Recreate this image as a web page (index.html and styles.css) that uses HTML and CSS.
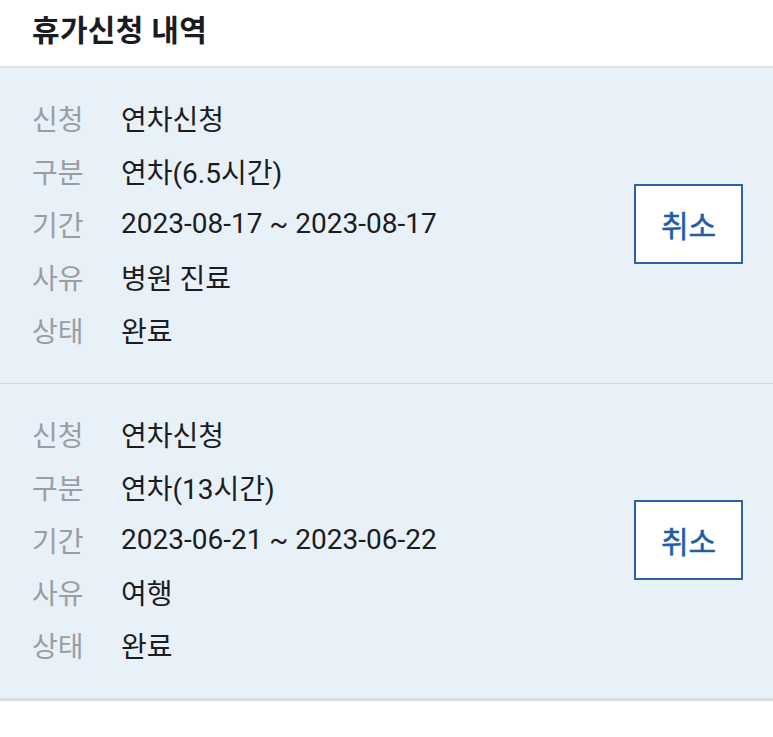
FILE: index.html
```html
<!DOCTYPE html>
<html lang="ko">
<head>
<meta charset="utf-8">
<link rel="stylesheet" href="styles.css">
</head>
<body>
<div class="page">
  <header class="header"><h1 class="title">휴가신청 내역</h1></header>
  <section class="list">
    <div class="card">
      <dl class="rows">
        <div class="row"><dt>신청</dt><dd>연차신청</dd></div>
        <div class="row"><dt>구분</dt><dd>연차(6.5시간)</dd></div>
        <div class="row"><dt>기간</dt><dd>2023-08-17 ~ 2023-08-17</dd></div>
        <div class="row"><dt>사유</dt><dd>병원 진료</dd></div>
        <div class="row"><dt>상태</dt><dd>완료</dd></div>
      </dl>
      <button class="cancel">취소</button>
    </div>
    <div class="card">
      <dl class="rows">
        <div class="row"><dt>신청</dt><dd>연차신청</dd></div>
        <div class="row"><dt>구분</dt><dd>연차(13시간)</dd></div>
        <div class="row"><dt>기간</dt><dd>2023-06-21 ~ 2023-06-22</dd></div>
        <div class="row"><dt>사유</dt><dd>여행</dd></div>
        <div class="row"><dt>상태</dt><dd>완료</dd></div>
      </dl>
      <button class="cancel">취소</button>
    </div>
  </section>
</div>
</body>
</html>
```
FILE: styles.css
```css
* { box-sizing: border-box; }
html, body { margin: 0; padding: 0; background: #ffffff; }
body {
  font-family: Roboto, "Noto Sans CJK KR", sans-serif;
  color: #1b1d20;
  width: 773px;
}
.header {
  height: 68px;
  border-bottom: 2px solid #dfe3e7;
  display: flex;
  align-items: center;
  padding: 0 32px 10px;
}
.title {
  margin: 0;
  font-size: 30px;
  font-weight: 700;
  color: #1a1c1f;
  letter-spacing: 0.3px;
}
.list {
  border-bottom: 3px solid #dadde1;
}
.card {
  background: #e8f0f8;
  display: flex;
  align-items: center;
  justify-content: space-between;
  padding: 24px 30px 27px 32px;
  height: 315px;
}
.card + .card {
  border-top: 1px solid #d4dae1;
}
.rows { margin: 0; display: flex; flex-direction: column; }
.row {
  display: flex;
  align-items: center;
  height: 52.8px;
  font-size: 28px;
}
.row dt {
  width: 89px;
  color: #9a9ea4;
}
.row dd {
  margin: 0;
  color: #1b1d20;
}
.cancel {
  width: 109px;
  height: 80px;
  background: #ffffff;
  border: 2px solid #2c63a6;
  color: #1e5ea8;
  font-family: Roboto, "Noto Sans CJK KR", sans-serif;
  font-size: 30px;
  font-weight: 400;
  -webkit-text-stroke: 0.5px #1e5ea8;
  padding: 0;
}
```
